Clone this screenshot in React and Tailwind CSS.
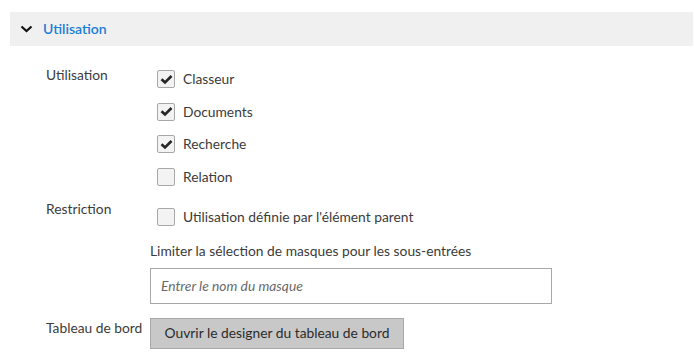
import React from "react";

function Check({ checked }) {
  return (
    <span className="w-[18px] h-[18px] shrink-0 rounded-[2px] border border-[#a8a8a8] bg-[#f3f3f3] flex items-center justify-center">
      {checked && (
        <svg width="13" height="11" viewBox="0 0 13 11">
          <path d="M1.5 5.2 L5 8.5 L11.5 2" fill="none" stroke="#262626" strokeWidth="2.6" />
        </svg>
      )}
    </span>
  );
}

function CheckRow({ checked, label }) {
  return (
    <div className="flex items-center h-[18px] gap-[8px]">
      <Check checked={checked} />
      <span className="text-[13.8px] text-[#3b3b3b] leading-none">{label}</span>
    </div>
  );
}

export default function App() {
  return (
    <div className="w-[694px] h-[355px] bg-white pt-[12px] pl-[10px] pr-[1px] text-[#3b3b3b]" style={{ fontFamily: "Lato, 'Open Sans', sans-serif" }}>
      <div className="h-[34px] bg-[#f0f0f0] flex items-center pl-[10px]">
        <svg width="13" height="8" viewBox="0 0 13 8" className="mr-[10px] mt-[-1px]">
          <path d="M1.5 1.5 L6.5 6 L11.5 1.5" fill="none" stroke="#111" strokeWidth="2.2" />
        </svg>
        <span className="text-[14px] font-semibold text-[#1a7ed6] mt-[-2px]">Utilisation</span>
      </div>
      <div className="pl-[36px]">
        <div className="flex mt-[20px]">
          <div className="w-[111px] text-[13.8px] leading-none pt-[2px]">Utilisation</div>
          <div className="flex flex-col gap-[14.5px] pt-[4px]">
            <CheckRow checked label="Classeur" />
            <CheckRow checked label="Documents" />
            <CheckRow checked label="Recherche" />
            <CheckRow label="Relation" />
          </div>
        </div>
        <div className="flex mt-[14px]">
          <div className="w-[104px] text-[13.8px] leading-none pt-[2px]">Restriction</div>
          <div className="flex flex-col">
            <div className="pl-[7px] pt-[8px]">
              <CheckRow label="Utilisation définie par l'élément parent" />
            </div>
            <div className="text-[13.8px] leading-none mt-[18px]">Limiter la sélection de masques pour les sous-entrées</div>
            <div className="mt-[11px] w-[402px] h-[36px] border border-[#a8a8a8] flex items-center px-[10px]">
              <span className="text-[13.8px] italic text-[#6a6a6a]">Entrer le nom du masque</span>
            </div>
          </div>
        </div>
        <div className="flex mt-[14px]">
          <div className="w-[104px] text-[13.8px] leading-none pt-[3px]">Tableau de bord</div>
          <div className="w-[254px] h-[31px] bg-[#c8c8c8] border border-[#a8a8a8] flex items-center justify-center text-[13.8px] text-[#2b2b2b]">
            Ouvrir le designer du tableau de bord
          </div>
        </div>
      </div>
    </div>
  );
}
